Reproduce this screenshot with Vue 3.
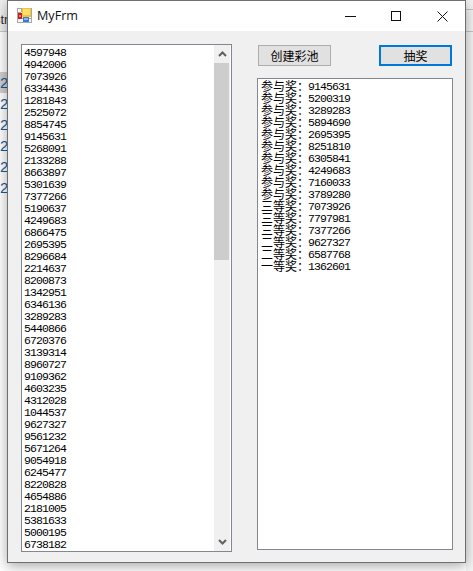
<template>
  <div class="desktop">
    <div class="behind-left">
      <div class="behind-top"><span class="tr">str</span></div>
      <div class="behind-row" v-for="(row, i) in 6" :key="i" :class="{ active: i === 0 }">2.</div>
    </div>

    <div class="window">
      <div class="titlebar">
        <svg class="app-icon" width="15" height="15" viewBox="0 0 15 15">
          <rect x="0" y="0" width="15" height="15" fill="#f4f4f4" />
          <path d="M0.5 0V15M4.5 0V4M0 4.5H4M0 10.5H15M10.5 11V15M14.5 0V15M0 14.5H15M0 0.5H5" stroke="#a8a8a8" fill="none" />
          <rect x="5" y="0" width="9" height="9" fill="#f2c230" />
          <rect x="6" y="1" width="7" height="6" fill="#fbdf6e" />
          <rect x="1" y="5" width="4" height="6" fill="#c8201c" />
          <rect x="2" y="7" width="2" height="2" fill="#f08070" />
          <rect x="6" y="9" width="6" height="5" fill="#3b78d0" />
          <rect x="7" y="10" width="4" height="2" fill="#8ab8ee" />
        </svg>
        <span class="title">MyFrm</span>
        <div class="controls">
          <div class="ctl">
            <svg width="11" height="11" viewBox="0 0 11 11"><path d="M0 5.5H11" stroke="#111" /></svg>
          </div>
          <div class="ctl">
            <svg width="11" height="11" viewBox="0 0 11 11"><rect x="0.5" y="0.5" width="9" height="9" fill="none" stroke="#111" /></svg>
          </div>
          <div class="ctl">
            <svg width="11" height="11" viewBox="0 0 11 11"><path d="M0.5 0.5L10.5 10.5M10.5 0.5L0.5 10.5" stroke="#111" /></svg>
          </div>
        </div>
      </div>

      <div class="frm-body">
        <div class="listbox">
          <div class="items">
            <div class="item" v-for="n in numbers" :key="n">{{ n }}</div>
          </div>
          <div class="scrollbar">
            <div class="arrow">
              <svg width="9" height="6" viewBox="0 0 9 6"><path d="M1 5L4.5 1.5L8 5" fill="none" stroke="#606060" stroke-width="2" /></svg>
            </div>
            <div class="thumb"></div>
            <div class="track"></div>
            <div class="arrow">
              <svg width="9" height="6" viewBox="0 0 9 6"><path d="M1 1L4.5 4.5L8 1" fill="none" stroke="#606060" stroke-width="2" /></svg>
            </div>
          </div>
        </div>

        <div class="right">
          <div class="buttons">
            <button class="btn">创建彩池</button>
            <button class="btn primary">抽奖</button>
          </div>
          <div class="textbox">
            <div class="line" v-for="r in results" :key="r.num">
              <span class="label">{{ r.label }}：</span><span class="num">{{ r.num }}</span>
            </div>
          </div>
        </div>
      </div>
    </div>

    <div class="behind-right">
      <div class="rline first"></div>
      <div class="rline"></div>
    </div>
  </div>
</template>

<script setup>
const numbers = [
  4597948, 4942006, 7073926, 6334436, 1281843, 2525072, 8854745, 9145631, 5268091, 2133288,
  8663897, 5301639, 7377266, 5190637, 4249683, 6866475, 2695395, 8296684, 2214637, 8200873,
  1342951, 6346136, 3289283, 5440866, 6720376, 3139314, 8960727, 9109362, 4603235, 4312028,
  1044537, 9627327, 9561232, 5671264, 9054918, 6245477, 8220828, 4654886, 2181005, 5381633,
  5000195, 6738182
]

const results = [
  { label: '参与奖', num: 9145631 },
  { label: '参与奖', num: 5200319 },
  { label: '参与奖', num: 3289283 },
  { label: '参与奖', num: 5894690 },
  { label: '参与奖', num: 2695395 },
  { label: '参与奖', num: 8251810 },
  { label: '参与奖', num: 6305841 },
  { label: '参与奖', num: 4249683 },
  { label: '参与奖', num: 7160033 },
  { label: '参与奖', num: 3789280 },
  { label: '三等奖', num: 7073926 },
  { label: '三等奖', num: 7797981 },
  { label: '三等奖', num: 7377266 },
  { label: '二等奖', num: 9627327 },
  { label: '二等奖', num: 6587768 },
  { label: '一等奖', num: 1362601 }
]
</script>

<style>
html, body {
  margin: 0;
  overflow: hidden;
  background: #fff;
}
</style>

<style scoped>
.desktop {
  display: flex;
  width: 473px;
  height: 571px;
  overflow: hidden;
  background: #fff;
  font-family: "Liberation Mono", "Noto Sans CJK SC", monospace;
}

.behind-left {
  width: 7px;
  flex: none;
  overflow: hidden;
  font-family: "Liberation Sans", sans-serif;
}
.behind-top {
  height: 31px;
  border-bottom: 1px solid #c8c8c8;
  background: #f0f0f0;
  margin-bottom: 40px;
}
.tr {
  display: block;
  margin-left: -6px;
  padding-top: 13px;
  font-size: 13px;
  line-height: 14px;
  color: #333;
}
.behind-row {
  height: 21px;
  line-height: 21px;
  font-size: 15px;
  color: #0f5c9e;
  margin-left: -1px;
  width: 12px;
  padding-left: 1px;
}
.behind-row.active {
  background: #cfcfcf;
}

.behind-right {
  flex: 1;
  background: #f4f4f4;
  padding-top: 9px;
}
.rline {
  height: 1px;
  background: #c4c4c4;
}
.rline.first {
  margin-bottom: 21px;
}

.window {
  position: relative;
  z-index: 1;
  width: 459px;
  height: 563px;
  flex: none;
  box-sizing: border-box;
  border: 1px solid #6f6f6f;
  background: #f0f0f0;
  box-shadow: 0 3px 12px rgba(0, 0, 0, 0.35);
}

.titlebar {
  height: 30px;
  background: #fff;
  display: flex;
  align-items: center;
  padding-left: 9px;
}
.app-icon {
  flex: none;
  margin-top: -1px;
}
.title {
  margin-left: 5px;
  font-family: "Open Sans", sans-serif;
  font-size: 12.6px;
  color: #111;
  position: relative;
  top: -1px;
}
.controls {
  margin-left: auto;
  display: flex;
  height: 100%;
}
.ctl {
  width: 46px;
  display: flex;
  align-items: center;
  justify-content: center;
}

.frm-body {
  display: flex;
  padding: 13px 0 0 13px;
  gap: 25px;
}

.listbox {
  width: 211px;
  height: 508px;
  box-sizing: border-box;
  border: 1px solid #828790;
  background: #fff;
  display: flex;
  overflow: hidden;
}
.items {
  flex: 1;
  padding: 2px 0 0 2px;
  overflow: hidden;
}
.item {
  font-size: 11.5px;
  letter-spacing: -0.9px;
  line-height: 12px;
  height: 12px;
  color: #000;
}
.scrollbar {
  width: 16px;
  margin-right: 1px;
  display: flex;
  flex-direction: column;
  background: #f0f0f0;
}
.arrow {
  height: 18px;
  flex: none;
  display: flex;
  align-items: center;
  justify-content: center;
}
.thumb {
  height: 197px;
  flex: none;
  margin-right: 1px;
  background: #cdcdcd;
}
.track {
  flex: 1;
}

.right {
  width: 196px;
}
.buttons {
  display: flex;
  justify-content: space-between;
  padding: 1px 1px 0;
  margin-bottom: 12px;
}
.btn {
  width: 73px;
  height: 21px;
  box-sizing: border-box;
  padding: 0;
  border: 1px solid #adadad;
  background: #e1e1e1;
  font-family: "Noto Sans CJK SC", sans-serif;
  font-size: 12px;
  color: #000;
  border-radius: 0;
}
.btn.primary {
  border: 2px solid #0078d7;
}

.textbox {
  height: 472px;
  box-sizing: border-box;
  border: 1px solid #828790;
  background: #fff;
  padding: 1px 0 0 3px;
  overflow: hidden;
}
.line {
  display: flex;
  height: 12px;
  line-height: 12px;
  color: #000;
}
.label {
  font-family: "Noto Sans CJK SC", sans-serif;
  font-size: 12px;
  width: 47px;
  flex: none;
  white-space: nowrap;
}
.num {
  font-size: 11.5px;
  letter-spacing: -0.9px;
  padding-top: 1px;
}
</style>
